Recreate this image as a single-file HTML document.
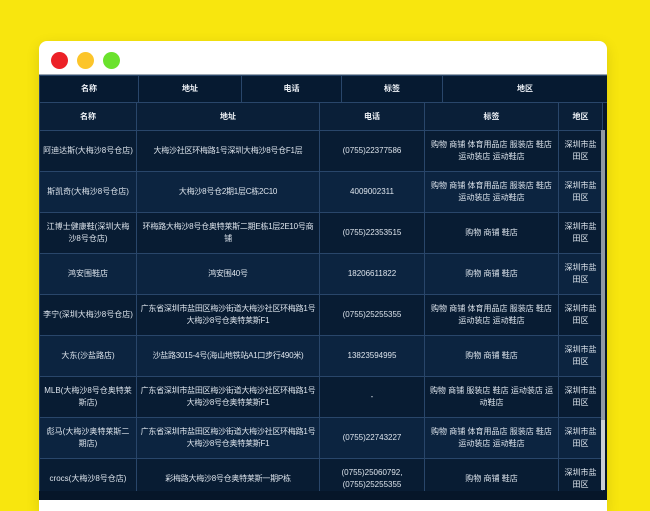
<!DOCTYPE html>
<html><head><meta charset="utf-8"><style>
*{margin:0;padding:0;box-sizing:border-box}
body{width:650px;height:500px;background:#f8e60e;overflow:hidden;position:relative;font-family:"Liberation Sans","Noto Sans CJK SC",sans-serif}
.win{position:absolute;left:39px;top:41px;width:568px;height:470px;background:#fff;border-radius:8px 8px 0 0;box-shadow:0 4px 14px rgba(0,0,0,.12)}
.dot{position:absolute;top:11px;width:17px;height:17px;border-radius:50%}
.dark{position:absolute;left:39px;top:74px;width:568px;height:426px;background:#061629;border-top:1px solid #9aa5b0;overflow:hidden}
table{border-collapse:collapse;table-layout:fixed;position:absolute;left:0;color:#dde4ec;font-size:8px;text-align:center}
td,th{border:1px solid #29466a;line-height:12px;padding:0 3px}
th{font-weight:bold;color:#eef2f7}
.t1{top:0;width:568px}
.t1 th{height:27px;background:#061a31}
.t2{top:27px;width:563px}
.t2 th{height:28px;background:#0a1f38}
.t2 td{height:41px}
.t2 td:nth-child(2){letter-spacing:-0.25px;padding:0 2px}
.t2 tr:nth-child(odd) td{background:#0c2440}
.t2 tr:nth-child(even) td{background:#081c33}
.sb{position:absolute;left:562px;top:55px;width:4px;height:290px;background:#8f98a3}
.sb2{position:absolute;left:562px;top:345px;width:4px;height:70px;background:#c9ced4}
</style></head><body>
<div class="win">
<div class="dot" style="left:12px;background:#ec2127"></div>
<div class="dot" style="left:38px;background:#fcc52a"></div>
<div class="dot" style="left:64px;background:#6ae22c"></div>
</div>
<div class="dark">
<table class="t1"><colgroup><col style="width:99px"><col style="width:103px"><col style="width:100px"><col style="width:101px"><col style="width:165px"></colgroup>
<tr><th>名称</th><th>地址</th><th>电话</th><th>标签</th><th>地区</th></tr></table>
<table class="t2"><colgroup><col style="width:97px"><col style="width:183px"><col style="width:105px"><col style="width:134px"><col style="width:44px"></colgroup>
<tr><th>名称</th><th>地址</th><th>电话</th><th>标签</th><th>地区</th></tr>
<tr><td>阿迪达斯(大梅沙8号仓店)</td><td>大梅沙社区环梅路1号深圳大梅沙8号仓F1层</td><td>(0755)22377586</td><td>购物 商铺 体育用品店 服装店 鞋店 运动装店 运动鞋店</td><td>深圳市盐田区</td></tr>
<tr><td>斯凯奇(大梅沙8号仓店)</td><td>大梅沙8号仓2期1层C栋2C10</td><td>4009002311</td><td>购物 商铺 体育用品店 服装店 鞋店 运动装店 运动鞋店</td><td>深圳市盐田区</td></tr>
<tr><td>江博士健康鞋(深圳大梅沙8号仓店)</td><td>环梅路大梅沙8号仓奥特莱斯二期E栋1层2E10号商铺</td><td>(0755)22353515</td><td>购物 商铺 鞋店</td><td>深圳市盐田区</td></tr>
<tr><td>鸿安围鞋店</td><td>鸿安围40号</td><td>18206611822</td><td>购物 商铺 鞋店</td><td>深圳市盐田区</td></tr>
<tr><td>李宁(深圳大梅沙8号仓店)</td><td>广东省深圳市盐田区梅沙街道大梅沙社区环梅路1号大梅沙8号仓奥特莱斯F1</td><td>(0755)25255355</td><td>购物 商铺 体育用品店 服装店 鞋店 运动装店 运动鞋店</td><td>深圳市盐田区</td></tr>
<tr><td>大东(沙盐路店)</td><td>沙盐路3015-4号(海山地铁站A1口步行490米)</td><td>13823594995</td><td>购物 商铺 鞋店</td><td>深圳市盐田区</td></tr>
<tr><td>MLB(大梅沙8号仓奥特莱斯店)</td><td>广东省深圳市盐田区梅沙街道大梅沙社区环梅路1号大梅沙8号仓奥特莱斯F1</td><td>-</td><td>购物 商铺 服装店 鞋店 运动装店 运动鞋店</td><td>深圳市盐田区</td></tr>
<tr><td>彪马(大梅沙奥特莱斯二期店)</td><td>广东省深圳市盐田区梅沙街道大梅沙社区环梅路1号大梅沙8号仓奥特莱斯F1</td><td>(0755)22743227</td><td>购物 商铺 体育用品店 服装店 鞋店 运动装店 运动鞋店</td><td>深圳市盐田区</td></tr>
<tr><td>crocs(大梅沙8号仓店)</td><td>彩梅路大梅沙8号仓奥特莱斯一期P栋</td><td>(0755)25060792,(0755)25255355</td><td>购物 商铺 鞋店</td><td>深圳市盐田区</td></tr>
</table>
<div style="position:absolute;left:0;top:416px;width:568px;height:20px;background:#061629"></div>
<div class="sb"></div><div class="sb2"></div>
</div>
</body></html>
